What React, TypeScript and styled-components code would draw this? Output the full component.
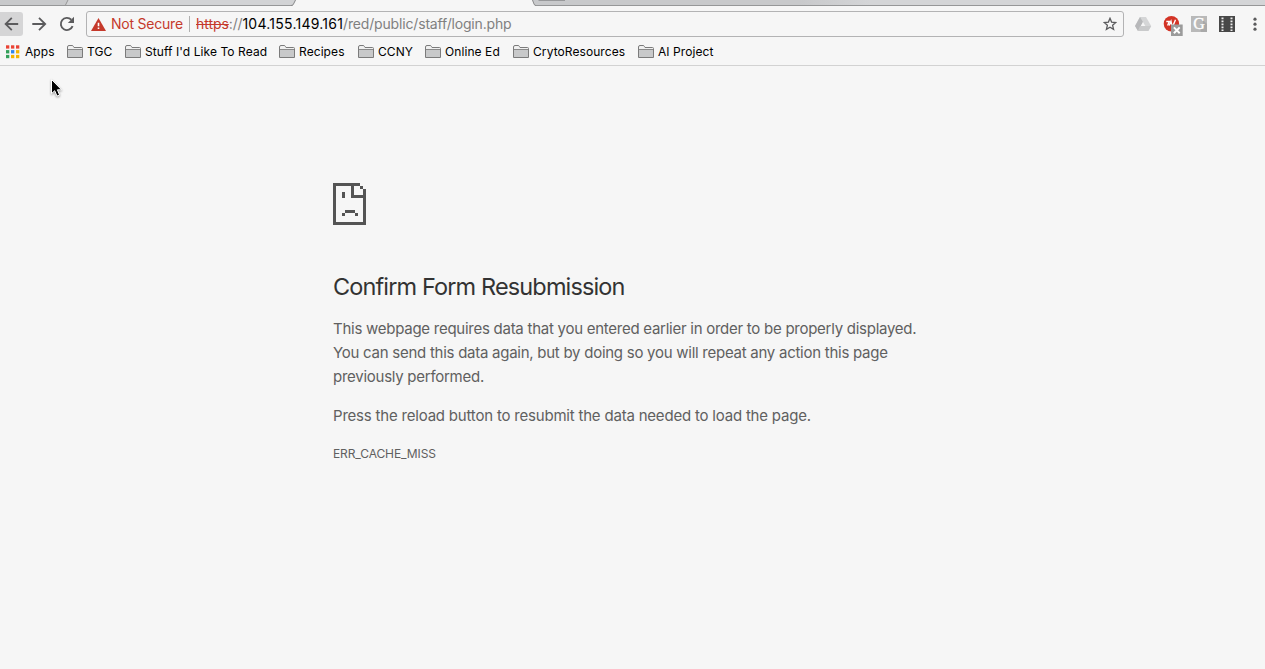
import React from 'react';
import styled, { createGlobalStyle } from 'styled-components';

const GlobalStyle = createGlobalStyle`
  * { box-sizing: border-box; }
  html, body { margin: 0; background: #f6f6f6; overflow: hidden; }
  body { font-family: Inter, "Liberation Sans", sans-serif; }
`;

const Window = styled.div`
  width: 100%;
  height: 669px;
  display: flex;
  flex-direction: column;
  background: #f6f6f6;
`;

const TabStrip = styled.div`
  height: 6px;
  flex: none;
  svg { display: block; }
`;

const Toolbar = styled.div`
  height: 32px;
  flex: none;
  display: flex;
  align-items: flex-start;
  padding-top: 5px;
`;

const NavButton = styled.button<{ $active?: boolean; $width: number }>`
  width: ${p => p.$width}px;
  height: 24px;
  margin-top: 1px;
  padding: 0;
  border: 0;
  border-radius: ${p => (p.$active ? '0 3px 3px 0' : '0')};
  background: ${p => (p.$active ? '#d5d5d6' : 'transparent')};
  display: flex;
  align-items: center;
  justify-content: center;
`;

const AddressBar = styled.div`
  width: 1038px;
  height: 26px;
  margin-left: 7px;
  border: 1px solid #b3b3b4;
  border-radius: 3px;
  display: flex;
  align-items: center;
  padding: 0 6px 0 4px;
  font-size: 14px;
  line-height: 24px;
  white-space: pre;
`;

const SecurityLabel = styled.span`
  width: 78px;
  margin-left: 5px;
  color: #c5392b;
  letter-spacing: -0.22px;
`;

const Separator = styled.span`
  width: 1px;
  height: 16px;
  background: #b0b0b0;
`;

const Url = styled.span`
  flex: 1;
  margin-left: 6px;
  color: #808080;
  letter-spacing: -0.17px;
`;

const Scheme = styled.span`
  color: #c5392b;
  letter-spacing: -0.05px;
  text-decoration: line-through;
`;

const Host = styled.span`
  color: #000;
  letter-spacing: 0.24px;
`;

const Extensions = styled.div`
  display: flex;
  margin-left: 10px;
  svg { display: block; }
`;

const BookmarkBar = styled.div`
  height: 28px;
  flex: none;
  display: flex;
  align-items: center;
  padding-left: 5px;
  border-bottom: 1px solid #d2d2d2;
`;

const Bookmark = styled.div<{ $width: number }>`
  width: ${p => p.$width}px;
  display: flex;
  align-items: center;
  gap: 4px;
  color: #000;
  font-size: 12px;
  line-height: 16px;
  letter-spacing: 0.08px;
  white-space: nowrap;
  svg { flex: none; }
`;

const Page = styled.main`
  flex: 1;
  position: relative;
  padding: 117px 0 0 333px;
  color: #606060;
`;

const Title = styled.h1`
  margin: 46px 0 0;
  color: #333;
  font-size: 23.5px;
  font-weight: 400;
  line-height: 32px;
  letter-spacing: -0.87px;
`;

const Paragraph = styled.p<{ $top: number; $spacing: number }>`
  margin: ${p => p.$top}px 0 0;
  font-size: 15px;
  line-height: 24px;
  letter-spacing: ${p => p.$spacing}px;
  white-space: nowrap;
`;

const ErrorCode = styled.div`
  margin-top: 17px;
  font-size: 12px;
  line-height: 18px;
  letter-spacing: -0.1px;
`;

const Pointer = styled.svg`
  position: absolute;
  left: 48px;
  top: 12px;
  path { filter: drop-shadow(0 1px 1px #0006); }
`;

const Folder = () => (
  <svg width="16" height="14" viewBox="0 0 16 14">
    <path d="M.5 12.5V2Q.5.5 2 .5H5Q6 .5 6.5 1.5L7 2.5H14.5Q15.5 2.5 15.5 3.5V12.5Z" fill="#f0f0f0" stroke="#7b7b7b" />
    <path d="M1 5H15V12H1Z" fill="#c8c9ca" />
    <path d="M1 4.5H15" stroke="#8a8a8a" />
  </svg>
);

const appDots = ['#ea4335', '#ea4335', '#ea4335', '#34a05a', '#2f86ee', '#f5b400', '#34a05a', '#f5b400', '#f5b400'];

const bookmarks = [
  { name: 'TGC', width: 58 },
  { name: "Stuff I'd Like To Read", width: 154 },
  { name: 'Recipes', width: 79 },
  { name: 'CCNY', width: 67 },
  { name: 'Online Ed', width: 88 },
  { name: 'CrytoResources', width: 125 },
  { name: 'AI Project', width: 90 },
];

const App = () => (
  <Window>
    <GlobalStyle />
    <TabStrip>
      <svg width="1265" height="6" viewBox="0 0 1265 6">
        <defs>
          <linearGradient id="strip" x1="800" x2="870" y1="0" y2="0" gradientUnits="userSpaceOnUse">
            <stop offset="0" stopColor="#c8c9cb" />
            <stop offset="1" stopColor="#d4d5d7" />
          </linearGradient>
        </defs>
        <path d="M0 0H1265V6H0Z" fill="url(#strip)" />
        <path d="M68 0H296L293 5H66Z" fill="#d2d3d5" />
        <path d="M65.5 5L68 0" stroke="#969696" fill="none" />
        <path d="M0 5.5H1265" stroke="#969798" />
        <path d="M296 0L293.5 4.5Q293 5.5 292 6H536Q534.5 5.5 534 4L532 0Z" fill="#f6f6f6" />
        <path d="M295.5 0L293.5 4Q292.8 5.5 291 5.5M532.5 0L534 4Q534.5 5.5 536 5.5" stroke="#8c8d8e" fill="none" />
        <path d="M538 0H565V1H539Z" fill="#98999b" />
      </svg>
    </TabStrip>
    <Toolbar>
      <NavButton $width={23} $active aria-label="Back">
        <svg width="16" height="16" viewBox="0 0 16 16" fill="none" stroke="#5b5b5d" strokeWidth="1.8">
          <path d="M14.2 8H1.8M7.8 1.8L1.6 8L7.8 14.2" />
        </svg>
      </NavButton>
      <NavButton $width={31} aria-label="Forward">
        <svg width="16" height="16" viewBox="0 0 16 16" fill="none" stroke="#5b5b5d" strokeWidth="1.8">
          <path d="M1.3 8H14M8 1.8L14.2 8L8 14.2" />
        </svg>
      </NavButton>
      <NavButton $width={25} aria-label="Reload">
        <svg width="16" height="16" viewBox="0 0 16 16">
          <path d="M13.6 10.2A6.1 6.1 0 1 1 12.3 3.7" fill="none" stroke="#5b5b5d" strokeWidth="1.9" />
          <path d="M15 .8V7H8.8Z" fill="#5b5b5d" />
        </svg>
      </NavButton>
      <AddressBar>
        <svg width="15" height="13" viewBox="0 0 15 13">
          <path d="M7.5 0L15 13H0Z" fill="#c5392b" />
          <path d="M6.7 4.8H8.3V8.2H6.7ZM6.7 9.6H8.3V11.1H6.7Z" fill="#fff" />
        </svg>
        <SecurityLabel>Not Secure</SecurityLabel>
        <Separator />
        <Url><Scheme>https</Scheme>://<Host>104.155.149.161</Host>/red/public/staff/login.php</Url>
        <svg width="14" height="14" viewBox="0 0 14 14">
          <path d="M7 1.3L8.6 5.1L12.8 5.5L9.6 8.3L10.6 12.4L7 10.2L3.4 12.4L4.4 8.3L1.2 5.5L5.4 5.1Z" fill="none" stroke="#5b5b5d" strokeWidth="1.3" />
        </svg>
      </AddressBar>
      <Extensions>
        <svg width="131" height="26" viewBox="0 0 131 26">
          <path d="M6 6H12L17.2 15L14.3 20H4L1 15Z" fill="#d5d6d7" />
          <path d="M6 6L9 11L4 20L1 15Z" fill="#b7b8ba" />
          <path d="M6 15H17.2L14.3 20H4Z" fill="#c9cacb" />
          <path d="M9 11L11.3 15H6.8Z" fill="#f6f6f6" />
          <circle cx="37.4" cy="12.8" r="7.7" fill="#d33325" />
          <path d="M32.3 10.5H35.3L33.6 14.5M35.2 14.6L37 10.3L37.8 14.3H39.2L41.5 8.8" fill="none" stroke="#fff" strokeWidth="1.4" />
          <path d="M37 13.5H48.7V25H37Z" fill="#9b9b9b" />
          <path d="M39.9 16.4L45.7 22.2M45.7 16.4L39.9 22.2" stroke="#fff" strokeWidth="2" />
          <path d="M57 5H73V21H57Z" fill="#b9b9b9" />
          <path d="M66 18L69 15V9L73 13V21H67Z" fill="#a9a9a9" />
          <text x="65" y="18.4" fontFamily="Liberation Serif, serif" fontSize="16" textAnchor="middle" fill="#fff" stroke="#fff" strokeWidth=".35">G</text>
          <path d="M85 5H101V21H85Z" fill="#484848" />
          <path d="M88.5 6.5V20M97.5 6.5V20" stroke="#ededed" strokeWidth="2" strokeDasharray="1.7 1.3" />
          <g fill="#5b5b5d">
            <circle cx="121" cy="8.2" r="1.6" />
            <circle cx="121" cy="13.2" r="1.6" />
            <circle cx="121" cy="18.2" r="1.6" />
          </g>
        </svg>
      </Extensions>
    </Toolbar>
    <BookmarkBar>
      <Bookmark $width={62}>
        <svg width="16" height="14" viewBox="0 0 16 14">
          {appDots.map((color, i) => (
            <rect key={i} x={1 + (i % 3) * 5} y={.3 + Math.floor(i / 3) * 4.8} width="3.3" height="3.3" fill={color} />
          ))}
        </svg>
        Apps
      </Bookmark>
      {bookmarks.map(b => (
        <Bookmark key={b.name} $width={b.width}>
          <Folder />
          {b.name}
        </Bookmark>
      ))}
    </BookmarkBar>
    <Page>
      <Pointer width="16" height="22" viewBox="0 0 16 22">
        <path d="M3.5 1.5V15.7L6.7 12.7L9 18.1L11.6 17L9.4 11.8H13.6Z" fill="#000" stroke="#fff" strokeWidth="1" />
      </Pointer>
      <svg width="33" height="42" viewBox="0 0 33 42" shapeRendering="crispEdges" display="block">
        <path fill="#545454" d="M0 0H27V3H21V12H30V6H33V42H0ZM3 3V39H30V15H18V3ZM27 3H30V6H27ZM9 9H12V15H9ZM12 27H22V30H12ZM9 30H12V33H9ZM22 30H25V33H22Z" fillRule="evenodd" />
      </svg>
      <Title>Confirm Form Resubmission</Title>
      <Paragraph $top={14} $spacing={-0.26}>
        This webpage requires data that you entered earlier in order to be properly displayed.<br />
        You can send this data again, but by doing so you will repeat any action this page<br />
        previously performed.
      </Paragraph>
      <Paragraph $top={15} $spacing={-0.2}>
        Press the reload button to resubmit the data needed to load the page.
      </Paragraph>
      <ErrorCode>ERR_CACHE_MISS</ErrorCode>
    </Page>
  </Window>
);

export default App;
